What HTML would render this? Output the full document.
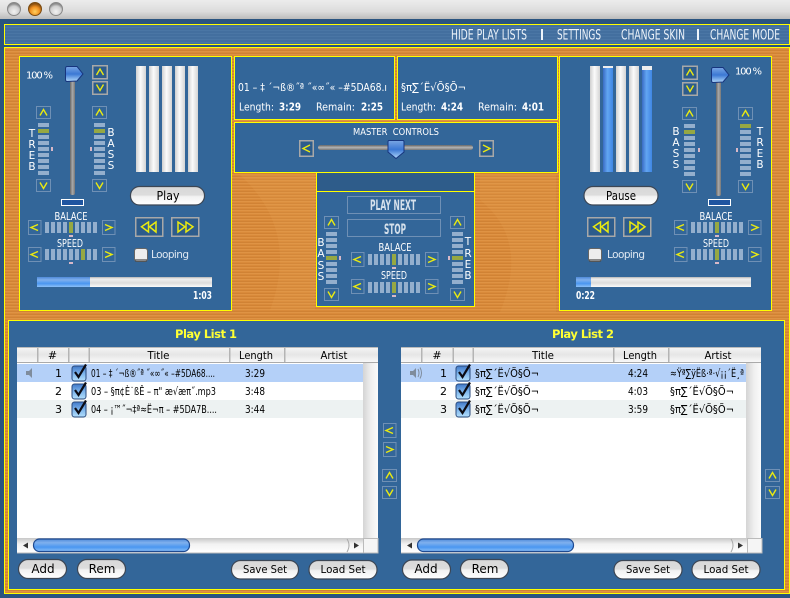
<!DOCTYPE html>
<html><head><meta charset="utf-8"><style>
html,body{margin:0;padding:0;width:790px;height:598px;overflow:hidden;background:#2a5480}
svg{display:block}
text{font-family:"DejaVu Sans","Liberation Sans",sans-serif;fill:#fff;font-size:10.5px}
.d{fill:#000;font-size:11px}
.m{font-size:10.5px;text-anchor:middle}
.b{font-weight:bold}
.n{font-size:14px;fill:#eef4fa}
.c{font-size:14px;fill:#d6e1ec}
</style></head><body>
<svg width="790" height="598" viewBox="0 0 790 598" xmlns="http://www.w3.org/2000/svg">
<defs>
<linearGradient id="tb" x1="0" y1="0" x2="0" y2="1"><stop offset="0" stop-color="#ececec"/><stop offset=".6" stop-color="#dcdcdc"/><stop offset="1" stop-color="#bcbcbc"/></linearGradient>
<pattern id="or" width="6" height="3" patternUnits="userSpaceOnUse"><rect width="6" height="3" fill="#d98a3a"/><rect width="6" height="1" fill="#df9344"/><rect y="2" width="6" height="1" fill="#d08234"/></pattern>
<pattern id="st" width="6" height="3" patternUnits="userSpaceOnUse"><rect width="6" height="3" fill="#436f9f"/><rect width="6" height="1" fill="#4a76a5"/></pattern>
<linearGradient id="bar" x1="0" y1="0" x2="1" y2="0"><stop offset="0" stop-color="#cfcfcf"/><stop offset=".45" stop-color="#fbfbfb"/><stop offset="1" stop-color="#d4d4d4"/></linearGradient>
<linearGradient id="bbar" x1="0" y1="0" x2="1" y2="0"><stop offset="0" stop-color="#3a6cc4"/><stop offset=".45" stop-color="#62a6f2"/><stop offset="1" stop-color="#3f86e4"/></linearGradient>
<linearGradient id="trk" x1="0" y1="0" x2="1" y2="0"><stop offset="0" stop-color="#666"/><stop offset=".5" stop-color="#aaa"/><stop offset="1" stop-color="#777"/></linearGradient>
<linearGradient id="trh" x1="0" y1="0" x2="0" y2="1"><stop offset="0" stop-color="#666"/><stop offset=".5" stop-color="#b4b4b4"/><stop offset="1" stop-color="#777"/></linearGradient>
<linearGradient id="th" x1="0" y1="0" x2="0" y2="1"><stop offset="0" stop-color="#7aa6e4"/><stop offset=".5" stop-color="#3b78d4"/><stop offset="1" stop-color="#b0d8fa"/></linearGradient>
<linearGradient id="pill" x1="0" y1="0" x2="0" y2="1"><stop offset="0" stop-color="#d8d8d8"/><stop offset=".45" stop-color="#dcdcdc"/><stop offset=".55" stop-color="#f2f2f2"/><stop offset="1" stop-color="#fff"/></linearGradient>
<linearGradient id="prog" x1="0" y1="0" x2="0" y2="1"><stop offset="0" stop-color="#b4b4b4"/><stop offset=".2" stop-color="#efefef"/><stop offset=".6" stop-color="#dcdcdc"/><stop offset="1" stop-color="#fbfbfb"/></linearGradient>
<linearGradient id="blu" x1="0" y1="0" x2="0" y2="1"><stop offset="0" stop-color="#4f8ad8"/><stop offset=".3" stop-color="#7fb0ee"/><stop offset=".65" stop-color="#4a96f0"/><stop offset="1" stop-color="#8cc0f8"/></linearGradient>
<linearGradient id="hdr" x1="0" y1="0" x2="0" y2="1"><stop offset="0" stop-color="#f6f6f6"/><stop offset=".5" stop-color="#e6e6e6"/><stop offset="1" stop-color="#f8f8f8"/></linearGradient>
<linearGradient id="sc" x1="0" y1="0" x2="1" y2="0"><stop offset="0" stop-color="#d4d4d4"/><stop offset=".5" stop-color="#eee"/><stop offset="1" stop-color="#fbfbfb"/></linearGradient>
<linearGradient id="sch" x1="0" y1="0" x2="0" y2="1"><stop offset="0" stop-color="#c8c8c8"/><stop offset=".4" stop-color="#f2f2f2"/><stop offset="1" stop-color="#fff"/></linearGradient>
<linearGradient id="cb" x1="0" y1="0" x2="0" y2="1"><stop offset="0" stop-color="#3f78c8"/><stop offset=".5" stop-color="#7db4ec"/><stop offset="1" stop-color="#b4e0fc"/></linearGradient>
<radialGradient id="amber" cx=".5" cy=".7" r=".6"><stop offset="0" stop-color="#ffd060"/><stop offset=".6" stop-color="#f09020"/><stop offset="1" stop-color="#8a5010"/></radialGradient>
<radialGradient id="grey" cx=".5" cy=".7" r=".6"><stop offset="0" stop-color="#f2f2f2"/><stop offset=".7" stop-color="#d0d0d0"/><stop offset="1" stop-color="#8c8c8c"/></radialGradient>

<g id="vs" fill="#94afcd"><rect y="0" width="11" height="4"/><rect y="6" width="11" height="4"/><rect y="12" width="11" height="4"/><rect y="18" width="11" height="4"/><rect y="24" width="11" height="4"/><rect y="30" width="11" height="4"/><rect y="36" width="11" height="4"/><rect y="42" width="11" height="4"/><rect y="48" width="11" height="4"/></g>
<g id="hs" fill="#94afcd"><rect x="0" width="4" height="11"/><rect x="6" width="4" height="11"/><rect x="12" width="4" height="11"/><rect x="18" width="4" height="11"/><rect x="24" width="4" height="11"/><rect x="30" width="4" height="11"/><rect x="36" width="4" height="11"/><rect x="42" width="4" height="11"/><rect x="48" width="4" height="11"/></g>

<g id="du"><rect x=".5" y=".5" width="14" height="12" fill="none" stroke="#6f90b5"/><polyline points="4,9.5 7.5,3.5 11,9.5" fill="none" stroke="#eaea10" stroke-width="1.4"/></g>
<g id="dd"><rect x=".5" y=".5" width="14" height="12" fill="none" stroke="#6f90b5"/><polyline points="4,3.5 7.5,9.5 11,3.5" fill="none" stroke="#eaea10" stroke-width="1.4"/></g>
<g id="dl"><rect x=".5" y=".5" width="12.5" height="14" fill="none" stroke="#6f90b5"/><polyline points="10,4.5 3,7.5 10,10.5" fill="none" stroke="#eaea10" stroke-width="1.4"/></g>
<g id="dr"><rect x=".5" y=".5" width="12.5" height="14" fill="none" stroke="#6f90b5"/><polyline points="3,4.5 10,7.5 3,10.5" fill="none" stroke="#eaea10" stroke-width="1.4"/></g>
<g id="bu"><rect x=".75" y=".75" width="14.5" height="13" fill="#2d5c8c" stroke="#a8a8a8" stroke-width="1.5"/><polyline points="4.5,10 8,4 11.5,10" fill="none" stroke="#eaea10" stroke-width="1.4"/></g>
<g id="bd"><rect x=".75" y=".75" width="14.5" height="12.5" fill="#2d5c8c" stroke="#a8a8a8" stroke-width="1.5"/><polyline points="4.5,3.5 8,9.5 11.5,3.5" fill="none" stroke="#eaea10" stroke-width="1.4"/></g>
<g id="rw"><rect x=".75" y=".75" width="27" height="18.5" fill="#2d5c8c" stroke="#a8a8a8" stroke-width="1.5"/><polygon points="6.5,9.75 13.5,5 13.5,15" fill="none" stroke="#eaea10" stroke-width="1.5"/><polygon points="14.5,9.75 21,5 21,15" fill="none" stroke="#eaea10" stroke-width="1.5"/></g>
<g id="ff"><rect x=".75" y=".75" width="27" height="18.5" fill="#2d5c8c" stroke="#a8a8a8" stroke-width="1.5"/><polygon points="7,5 7,15 14,9.75" fill="none" stroke="#eaea10" stroke-width="1.5"/><polygon points="15,5 15,15 22,9.75" fill="none" stroke="#eaea10" stroke-width="1.5"/></g>
<path id="vth" d="M2,0.5 H12 L18,8 L12,15 L2,15.5 Q0.5,15.5 0.5,13 V3 Q0.5,0.5 2,0.5Z" fill="url(#th)" stroke="#17357e"/>
<g id="cbx"><rect x="0" y="2" width="14" height="15" rx="2.5" fill="url(#cb)" stroke="#2a4a7c"/><path d="M3,8 L6.5,13 L14,0.5" fill="none" stroke="#0c0c14" stroke-width="2.2"/></g>
<g id="lp"><rect x=".5" y=".5" width="13" height="13" rx="2.5" fill="#eee" stroke="#666"/><rect x="1" y="11" width="12" height="2.5" fill="#222" opacity=".5"/></g>
<g id="sb">
<rect x="0" y="0" width="346" height="15" fill="url(#sch)"/>
<rect x="0" y="14.5" width="346" height="1" fill="#bbb"/>
<polygon points="6,7.5 11,4.5 11,10.5" fill="#333"/><polygon points="341,4.5 346,7.5 341,10.5" transform="translate(-4 0)" fill="#333"/>
<rect x="16.5" y="1" width="156" height="12.5" rx="6" fill="url(#blu)" stroke="#1f4a90" stroke-width="1.2"/>
<path d="M330,1 Q334,7 330,14" fill="none" stroke="#aaa"/>
<rect x="346.5" y=".5" width="14.5" height="14.5" fill="#f5f5f5" stroke="#bbb"/>
</g>
<g id="segsL"><use href="#vs" x="0" y="0"/><rect y="6" width="11" height="4" fill="#96a843"/></g>
</defs>

<!-- chrome -->
<rect width="790" height="598" fill="#2a5480"/>
<rect width="790" height="19" fill="url(#tb)"/>
<circle cx="14" cy="9" r="6.5" fill="url(#grey)" stroke="#888"/><circle cx="35" cy="9" r="6.5" fill="url(#amber)" stroke="#7a4a10"/><circle cx="56" cy="9" r="6.5" fill="url(#grey)" stroke="#888"/>

<rect x="4.5" y="24.5" width="785" height="20" fill="url(#st)" stroke="#ff0"/>
<text class="n" x="451" y="39.5" textLength="76" lengthAdjust="spacingAndGlyphs">HIDE PLAY LISTS</text>
<rect x="541" y="29" width="2" height="11" fill="#eef4fa"/>
<text class="n" x="557" y="39.5" textLength="44" lengthAdjust="spacingAndGlyphs">SETTINGS</text>
<text class="n" x="621" y="39.5" textLength="64" lengthAdjust="spacingAndGlyphs">CHANGE SKIN</text>
<rect x="697" y="29" width="2" height="11" fill="#eef4fa"/>
<text class="n" x="710" y="39.5" textLength="70" lengthAdjust="spacingAndGlyphs">CHANGE MODE</text>

<rect x="4.5" y="47.5" width="785" height="546" fill="url(#or)" stroke="#ff0"/>
<path d="M240,175 Q300,230 270,310 L315,310 L315,175Z M480,200 Q530,240 500,312 L556,312 L556,175 L480,175Z" fill="#e9a45a" opacity=".18"/>

<!-- left deck -->
<rect x="19.5" y="56.5" width="212" height="254" fill="#336699" stroke="#ff0"/>
<text x="26" y="78.5" textLength="27" lengthAdjust="spacing" style="font-size:10px">100 %</text>
<rect x="70" y="80" width="5" height="115" rx="2" fill="url(#trk)"/>
<use href="#vth" x="65" y="66"/>
<rect x="61.5" y="199.5" width="22" height="6" fill="#1f55a0" stroke="#fff"/>
<use href="#bu" x="92" y="65"/><use href="#bd" x="92" y="81"/>
<use href="#du" x="36" y="106"/><use href="#dd" x="36" y="179"/>
<use href="#du" x="92" y="106"/><use href="#dd" x="92" y="179"/>
<use href="#segsL" x="38" y="123"/><use href="#segsL" x="94" y="123"/>
<rect x="51" y="147" width="2" height="4" fill="#d8b8c8"/><rect x="90" y="147" width="2" height="4" fill="#d8b8c8"/>
<text class="m" x="32" y="137">T</text><text class="m" x="32" y="148">R</text><text class="m" x="32" y="159">E</text><text class="m" x="32" y="170">B</text>
<text class="m" x="111" y="136">B</text><text class="m" x="111" y="147">A</text><text class="m" x="111" y="158">S</text><text class="m" x="111" y="169">S</text>
<g fill="url(#bar)"><rect x="136" y="66" width="10" height="106"/><rect x="149" y="66" width="10" height="106"/><rect x="162" y="66" width="10" height="106"/><rect x="175" y="66" width="10" height="106"/><rect x="188" y="66" width="10" height="106"/></g>
<rect x="130.5" y="186.5" width="74" height="18.5" rx="9" fill="url(#pill)" stroke="#3c4654" stroke-width="1.2"/>
<text class="d" x="168" y="200" text-anchor="middle" style="font-size:12px" textLength="23" lengthAdjust="spacingAndGlyphs">Play</text>
<use href="#rw" x="135" y="217"/><use href="#ff" x="171" y="217"/>
<text class="m" x="71" y="220" textLength="33" lengthAdjust="spacingAndGlyphs">BALACE</text>
<use href="#dl" x="28" y="220"/><use href="#dr" x="102" y="220"/>
<use href="#hs" x="45" y="222"/><rect x="69" y="222" width="4" height="11" fill="#96a843"/><rect x="69" y="235" width="4" height="2" fill="#d8b8c8"/>
<text class="m" x="70" y="247" textLength="26" lengthAdjust="spacingAndGlyphs">SPEED</text>
<use href="#dl" x="28" y="247"/><use href="#dr" x="102" y="247"/>
<use href="#hs" x="45" y="249"/><rect x="81" y="249" width="4" height="11" fill="#96a843"/><rect x="69" y="262" width="4" height="2" fill="#d8b8c8"/>
<use href="#lp" x="134" y="248"/>
<text x="151" y="258" textLength="38" lengthAdjust="spacing" style="fill:#dfe8f2">Looping</text>
<rect x="37" y="277" width="175" height="10" fill="url(#prog)"/><rect x="37" y="277" width="53" height="10" fill="url(#blu)"/>
<text class="b" x="212" y="299" text-anchor="end" textLength="19" lengthAdjust="spacingAndGlyphs">1:03</text>

<!-- info -->
<rect x="234.5" y="56.5" width="160" height="63" fill="#336699" stroke="#ff0"/>
<text x="238" y="91" textLength="149" lengthAdjust="spacingAndGlyphs" style="font-size:10.5px">01 – ‡ ´¬ß®˝ª ˝«∞˝« –#5DA68.ı</text>
<text x="239" y="110.5" textLength="35" lengthAdjust="spacingAndGlyphs">Length:</text><text class="b" x="279" y="110.5" textLength="22" lengthAdjust="spacingAndGlyphs">3:29</text>
<text x="316" y="110.5" textLength="39" lengthAdjust="spacingAndGlyphs">Remain:</text><text class="b" x="361" y="110.5" textLength="22" lengthAdjust="spacingAndGlyphs">2:25</text>
<rect x="397.5" y="56.5" width="160" height="63" fill="#336699" stroke="#ff0"/>
<text x="401" y="91" textLength="65" lengthAdjust="spacingAndGlyphs" style="font-size:11px">§π∑´Ë√Õ§Õ¬</text>
<text x="401" y="110.5" textLength="35" lengthAdjust="spacingAndGlyphs">Length:</text><text class="b" x="441" y="110.5" textLength="22" lengthAdjust="spacingAndGlyphs">4:24</text>
<text x="478" y="110.5" textLength="39" lengthAdjust="spacingAndGlyphs">Remain:</text><text class="b" x="522" y="110.5" textLength="22" lengthAdjust="spacingAndGlyphs">4:01</text>

<!-- master -->
<rect x="234.5" y="122.5" width="323" height="50" fill="#336699" stroke="#ff0"/>
<text x="353" y="135" textLength="86" lengthAdjust="spacingAndGlyphs" style="font-size:10px" xml:space="preserve">MASTER  CONTROLS</text>
<rect x="299.75" y="140.75" width="13.5" height="15.5" fill="#2d5c8c" stroke="#a8a8a8" stroke-width="1.5"/><polyline points="310,145 303,148.5 310,152" fill="none" stroke="#eaea10" stroke-width="1.4"/>
<rect x="479.75" y="140.75" width="13.5" height="15.5" fill="#2d5c8c" stroke="#a8a8a8" stroke-width="1.5"/><polyline points="483,145 490,148.5 483,152" fill="none" stroke="#eaea10" stroke-width="1.4"/>
<rect x="318" y="145" width="155" height="5" rx="2.5" fill="url(#trh)"/>
<path d="M389,140.5 H403 Q404,140.5 404,142 V152 L396,158.5 L388,152 V142 Q388,140.5 389,140.5Z" fill="url(#th)" stroke="#17357e"/>

<!-- center lower -->
<rect x="316.5" y="172.5" width="158" height="134" fill="#336699" stroke="#ff0"/>
<rect x="317" y="173" width="157" height="18" fill="#2e5c8a"/>
<rect x="317" y="191" width="157" height="1" fill="#ff0"/>
<rect x="347.5" y="196.5" width="93" height="17" fill="none" stroke="#6f90b5"/>
<text class="c b" x="370" y="210" textLength="46" lengthAdjust="spacingAndGlyphs">PLAY NEXT</text>
<rect x="347.5" y="219.5" width="93" height="17" fill="none" stroke="#6f90b5"/>
<text class="c b" x="384" y="234" textLength="22" lengthAdjust="spacingAndGlyphs">STOP</text>
<use href="#du" x="324" y="216"/><use href="#dd" x="324" y="288"/>
<use href="#du" x="450" y="216"/><use href="#dd" x="450" y="288"/>
<use href="#vs" x="326" y="232"/><rect x="326" y="256" width="11" height="4" fill="#96a843"/>
<use href="#vs" x="452" y="232"/><rect x="452" y="256" width="11" height="4" fill="#96a843"/>
<rect x="339" y="256" width="2" height="4" fill="#d8b8c8"/><rect x="448" y="256" width="2" height="4" fill="#d8b8c8"/>
<text class="m" x="321" y="246">B</text><text class="m" x="321" y="257">A</text><text class="m" x="321" y="269">S</text><text class="m" x="321" y="280">S</text>
<text class="m" x="468" y="245">T</text><text class="m" x="468" y="257">R</text><text class="m" x="468" y="268">E</text><text class="m" x="468" y="279">B</text>
<text class="m" x="395" y="251" textLength="33" lengthAdjust="spacingAndGlyphs">BALACE</text>
<use href="#dl" x="351" y="252"/><use href="#dr" x="425" y="252"/>
<use href="#hs" x="368" y="254"/><rect x="392" y="254" width="4" height="11" fill="#96a843"/><rect x="392" y="267" width="4" height="2" fill="#d8b8c8"/>
<text class="m" x="394" y="279" textLength="26" lengthAdjust="spacingAndGlyphs">SPEED</text>
<use href="#dl" x="351" y="279"/><use href="#dr" x="425" y="279"/>
<use href="#hs" x="368" y="282"/><rect x="392" y="282" width="4" height="11" fill="#96a843"/><rect x="392" y="295" width="4" height="2" fill="#d8b8c8"/>

<!-- right deck -->
<rect x="559.5" y="56.5" width="212" height="254" fill="#336699" stroke="#ff0"/>
<g fill="url(#bar)"><rect x="590" y="66" width="10" height="106"/><rect x="616" y="66" width="10" height="106"/><rect x="629" y="66" width="10" height="106"/></g>
<rect x="603" y="66" width="10" height="106" fill="url(#bbar)"/><rect x="603" y="66" width="10" height="2" fill="#eee"/>
<rect x="642" y="66" width="10" height="106" fill="url(#bbar)"/><rect x="642" y="66" width="10" height="4" fill="#eee"/>
<use href="#bu" x="682" y="65.5"/><use href="#bd" x="682" y="82"/>
<use href="#du" x="682" y="107"/><use href="#dd" x="682" y="180"/>
<use href="#du" x="738" y="107"/><use href="#dd" x="738" y="180"/>
<use href="#segsL" x="684" y="124"/>
<use href="#vs" x="740" y="124"/><rect x="740" y="124" width="11" height="4" fill="#96a843"/>
<rect x="698" y="148" width="2" height="4" fill="#d8b8c8"/><rect x="736" y="148" width="2" height="4" fill="#d8b8c8"/>
<text class="m" x="676" y="135">B</text><text class="m" x="676" y="146">A</text><text class="m" x="676" y="157">S</text><text class="m" x="676" y="168">S</text>
<text class="m" x="760" y="135">T</text><text class="m" x="760" y="146">R</text><text class="m" x="760" y="157">E</text><text class="m" x="760" y="168">B</text>
<rect x="716" y="81" width="5" height="115" rx="2" fill="url(#trk)"/>
<use href="#vth" x="711" y="67"/>
<rect x="708.5" y="199.5" width="22" height="6" fill="#1f55a0" stroke="#fff"/>
<text x="735" y="74.5" textLength="27" lengthAdjust="spacing" style="font-size:10px">100 %</text>
<rect x="584" y="186.5" width="74" height="18.5" rx="9" fill="url(#pill)" stroke="#3c4654" stroke-width="1.2"/>
<text class="d" x="621" y="200" text-anchor="middle" style="font-size:12px" textLength="30" lengthAdjust="spacingAndGlyphs">Pause</text>
<use href="#rw" x="587" y="217"/><use href="#ff" x="623" y="217"/>
<text class="m" x="716" y="220" textLength="33" lengthAdjust="spacingAndGlyphs">BALACE</text>
<use href="#dl" x="674" y="220"/><use href="#dr" x="748" y="220"/>
<use href="#hs" x="691" y="222"/><rect x="715" y="222" width="4" height="11" fill="#96a843"/><rect x="715" y="235" width="4" height="2" fill="#d8b8c8"/>
<text class="m" x="716" y="247" textLength="26" lengthAdjust="spacingAndGlyphs">SPEED</text>
<use href="#dl" x="674" y="247"/><use href="#dr" x="748" y="247"/>
<use href="#hs" x="691" y="249"/><rect x="715" y="249" width="4" height="11" fill="#96a843"/><rect x="715" y="262" width="4" height="2" fill="#d8b8c8"/>
<use href="#lp" x="588" y="248"/>
<text x="607" y="258" textLength="38" lengthAdjust="spacing" style="fill:#dfe8f2">Looping</text>
<rect x="576" y="277" width="175" height="10" fill="url(#prog)"/><rect x="576" y="277" width="15" height="10" fill="url(#blu)"/>
<text class="b" x="576" y="299" textLength="19" lengthAdjust="spacingAndGlyphs">0:22</text>

<!-- playlist panel -->
<rect x="8.5" y="320.5" width="776" height="269" fill="#336699" stroke="#ff0"/>
<text class="b" x="175" y="338" textLength="62" lengthAdjust="spacing" style="fill:#ff3;font-size:11.5px">Play List 1</text>
<text class="b" x="552" y="338" textLength="62" lengthAdjust="spacing" style="fill:#ff3;font-size:11.5px">Play List 2</text>

<!-- table 1 -->
<rect x="17" y="347" width="361" height="191" fill="url(#sc)"/>
<rect x="363" y="363" width="15" height="175" fill="url(#sc)"/>
<rect x="17" y="363" width="346" height="175" fill="#fff"/>
<rect x="17" y="347" width="361" height="15" fill="url(#hdr)"/><rect x="17" y="347" width="361" height="1" fill="#bbb"/><rect x="17" y="362" width="361" height="1" fill="#aaa"/>
<g fill="#b4b4b4"><rect x="37" y="348" width="1.5" height="14"/><rect x="68" y="348" width="1.5" height="14"/><rect x="88.5" y="348" width="1.5" height="14"/><rect x="229" y="348" width="1.5" height="14"/><rect x="284" y="348" width="1.5" height="14"/></g>
<text class="d" x="52.5" y="359" text-anchor="middle">#</text>
<text class="d" x="158.5" y="359" text-anchor="middle" textLength="22" lengthAdjust="spacingAndGlyphs">Title</text>
<text class="d" x="256" y="359" text-anchor="middle" textLength="34" lengthAdjust="spacingAndGlyphs">Length</text>
<text class="d" x="334" y="359" text-anchor="middle" textLength="27" lengthAdjust="spacingAndGlyphs">Artist</text>
<rect x="17" y="364" width="346" height="18" fill="#b4d0f8"/><rect x="17" y="400" width="346" height="18" fill="#edf2f2"/>
<path d="M26,371 h3 l3,-3 v10 l-3,-3 h-3z" fill="#7f8c9c"/>
<text class="d" x="55" y="377">1</text><text class="d" x="55" y="395">2</text><text class="d" x="55" y="413">3</text>
<use href="#cbx" x="72" y="364"/><use href="#cbx" x="72" y="382"/><use href="#cbx" x="72" y="400"/>
<text class="d" x="91" y="377" textLength="124" lengthAdjust="spacingAndGlyphs">01 – ‡ ´¬ß®˝ª ˝«∞˝« –#5DA68....</text>
<text class="d" x="91" y="395" textLength="125" lengthAdjust="spacingAndGlyphs">03 – §π¢È˙ßÊ – π" æ√æπ˝.mp3</text>
<text class="d" x="91" y="413" textLength="126" lengthAdjust="spacingAndGlyphs">04 – ¡™˝¬‡ª≈Ë¬π – #5DA7B....</text>
<text class="d" x="245" y="377" textLength="20" lengthAdjust="spacingAndGlyphs">3:29</text>
<text class="d" x="245" y="395" textLength="20" lengthAdjust="spacingAndGlyphs">3:48</text>
<text class="d" x="245" y="413" textLength="20" lengthAdjust="spacingAndGlyphs">3:44</text>
<use href="#sb" x="17" y="538"/>

<!-- table 2 -->
<rect x="401" y="347" width="360" height="191" fill="url(#sc)"/>
<rect x="746" y="363" width="15" height="175" fill="url(#sc)"/>
<rect x="401" y="363" width="345" height="175" fill="#fff"/>
<rect x="401" y="347" width="360" height="15" fill="url(#hdr)"/><rect x="401" y="347" width="360" height="1" fill="#bbb"/><rect x="401" y="362" width="360" height="1" fill="#aaa"/>
<g fill="#b4b4b4"><rect x="421" y="348" width="1.5" height="14"/><rect x="452.5" y="348" width="1.5" height="14"/><rect x="472.5" y="348" width="1.5" height="14"/><rect x="613" y="348" width="1.5" height="14"/><rect x="668" y="348" width="1.5" height="14"/></g>
<text class="d" x="437" y="359" text-anchor="middle">#</text>
<text class="d" x="543" y="359" text-anchor="middle" textLength="22" lengthAdjust="spacingAndGlyphs">Title</text>
<text class="d" x="640" y="359" text-anchor="middle" textLength="34" lengthAdjust="spacingAndGlyphs">Length</text>
<text class="d" x="718" y="359" text-anchor="middle" textLength="27" lengthAdjust="spacingAndGlyphs">Artist</text>
<rect x="401" y="364" width="345" height="18" fill="#b4d0f8"/><rect x="401" y="400" width="345" height="18" fill="#edf2f2"/>
<path d="M410,371 h3 l3,-3 v10 l-3,-3 h-3z" fill="#7f8c9c"/><path d="M418,369 q2,4 0,8 M420,367.5 q3,5.5 0,11" fill="none" stroke="#7f8c9c"/>
<text class="d" x="440" y="377">1</text><text class="d" x="440" y="395">2</text><text class="d" x="440" y="413">3</text>
<use href="#cbx" x="456" y="364"/><use href="#cbx" x="456" y="382"/><use href="#cbx" x="456" y="400"/>
<text class="d" x="475" y="377" textLength="64" lengthAdjust="spacingAndGlyphs">§π∑´Ë√Õ§Õ¬</text>
<text class="d" x="475" y="395" textLength="64" lengthAdjust="spacingAndGlyphs">§π∑´Ë√Õ§Õ¬</text>
<text class="d" x="475" y="413" textLength="64" lengthAdjust="spacingAndGlyphs">§π∑´Ë√Õ§Õ¬</text>
<text class="d" x="628" y="377" textLength="20" lengthAdjust="spacingAndGlyphs">4:24</text>
<text class="d" x="628" y="395" textLength="20" lengthAdjust="spacingAndGlyphs">4:03</text>
<text class="d" x="628" y="413" textLength="20" lengthAdjust="spacingAndGlyphs">3:59</text>
<text class="d" x="670" y="377" textLength="74" lengthAdjust="spacingAndGlyphs">≈Ÿª∑ÿËß·ª·√¡¡´Ë¸ª</text>
<text class="d" x="670" y="395" textLength="64" lengthAdjust="spacingAndGlyphs">§π∑´Ë√Õ§Õ¬</text>
<text class="d" x="670" y="413" textLength="64" lengthAdjust="spacingAndGlyphs">§π∑´Ë√Õ§Õ¬</text>
<use href="#sb" x="401" y="538"/>

<!-- move buttons -->
<use href="#dl" x="383" y="423"/><use href="#dr" x="383" y="442"/>
<use href="#du" x="382" y="469"/><use href="#dd" x="382" y="486"/>
<use href="#du" x="765" y="469"/><use href="#dd" x="765" y="486"/>

<!-- pills -->
<g fill="url(#pill)" stroke="#3c4654" stroke-width="1.2">
<rect x="18.5" y="559.5" width="48" height="19" rx="9.5"/><rect x="77.5" y="559.5" width="48" height="19" rx="9.5"/>
<rect x="231.5" y="560.5" width="67" height="18.5" rx="9"/><rect x="309" y="560.5" width="68" height="18.5" rx="9"/>
<rect x="402.5" y="560" width="48" height="19" rx="9.5"/><rect x="460.5" y="559.5" width="48" height="19" rx="9.5"/>
<rect x="614" y="560.5" width="68" height="18.5" rx="9"/><rect x="692" y="560.5" width="68" height="18.5" rx="9"/>
</g>
<g text-anchor="middle">
<text class="d" x="43" y="573" style="font-size:12px">Add</text><text class="d" x="102" y="573" style="font-size:12px">Rem</text>
<text class="d" x="265" y="573" textLength="44" lengthAdjust="spacingAndGlyphs">Save Set</text><text class="d" x="343" y="573" textLength="45" lengthAdjust="spacingAndGlyphs">Load Set</text>
<text class="d" x="426" y="573" style="font-size:12px">Add</text><text class="d" x="485" y="573" style="font-size:12px">Rem</text>
<text class="d" x="648" y="573" textLength="44" lengthAdjust="spacingAndGlyphs">Save Set</text><text class="d" x="726" y="573" textLength="45" lengthAdjust="spacingAndGlyphs">Load Set</text>
</g>
</svg>
</body></html>
